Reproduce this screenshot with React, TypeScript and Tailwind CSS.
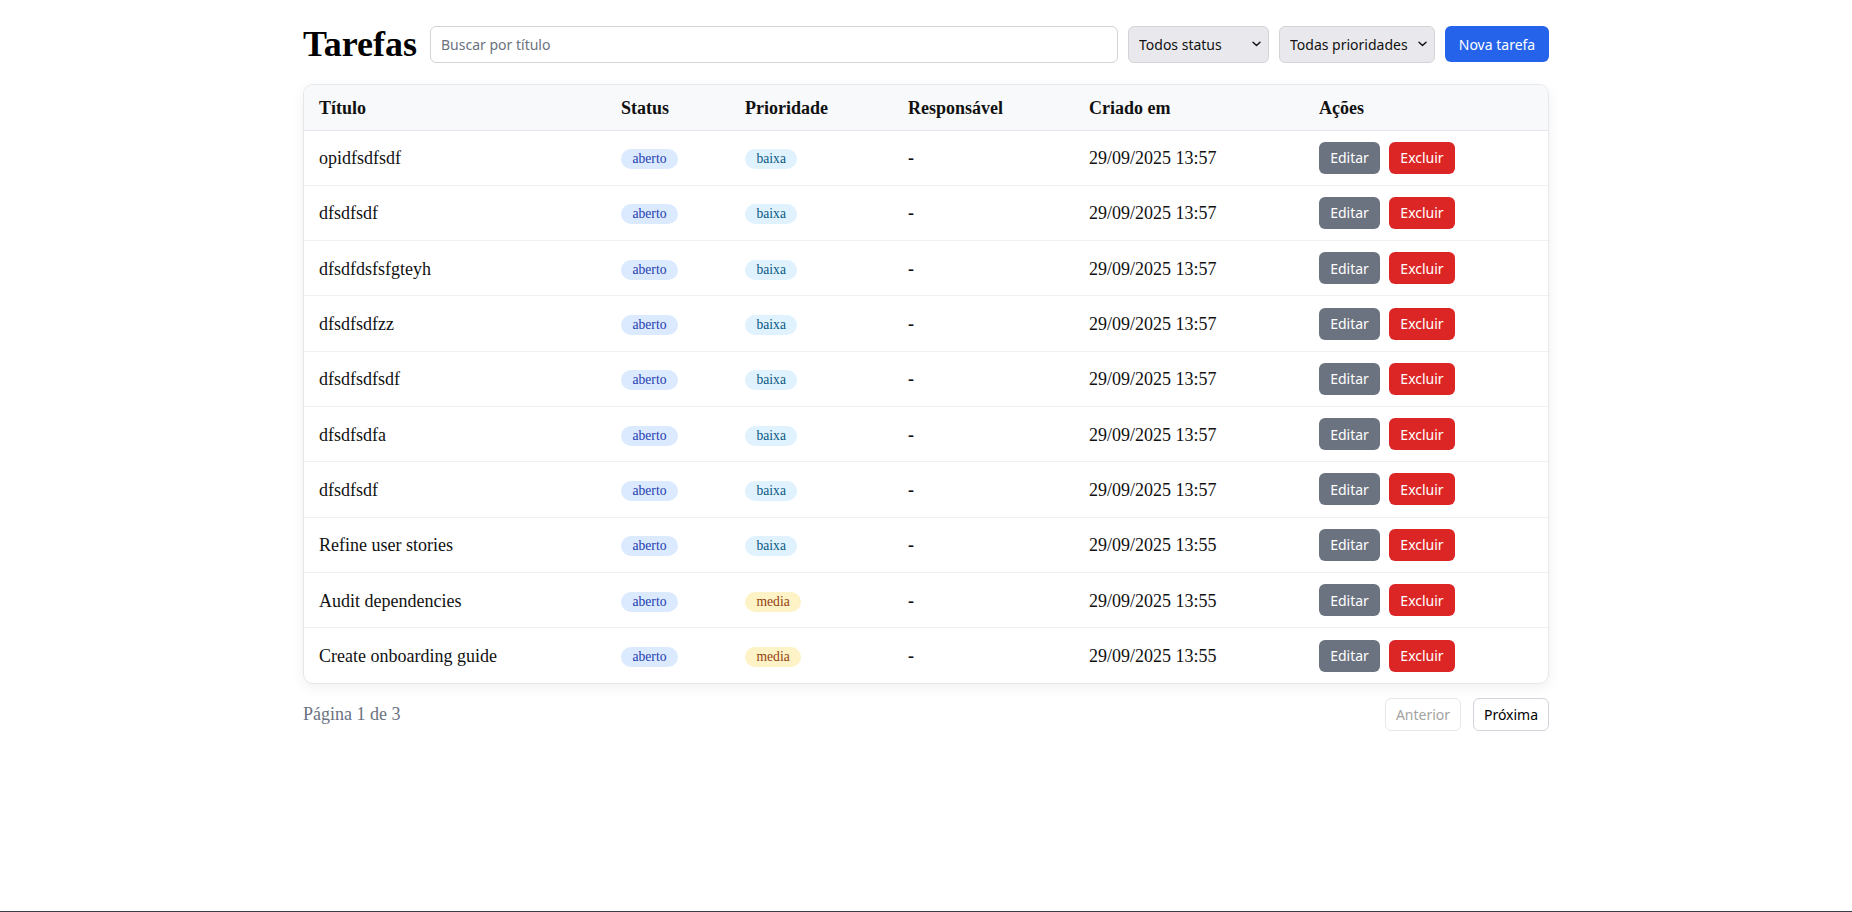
import React from "react";

type Row = { title: string; prio: "baixa" | "media"; time: string };

const rows: Row[] = [
  { title: "opidfsdfsdf", prio: "baixa", time: "29/09/2025 13:57" },
  { title: "dfsdfsdf", prio: "baixa", time: "29/09/2025 13:57" },
  { title: "dfsdfdsfsfgteyh", prio: "baixa", time: "29/09/2025 13:57" },
  { title: "dfsdfsdfzz", prio: "baixa", time: "29/09/2025 13:57" },
  { title: "dfsdfsdfsdf", prio: "baixa", time: "29/09/2025 13:57" },
  { title: "dfsdfsdfa", prio: "baixa", time: "29/09/2025 13:57" },
  { title: "dfsdfsdf", prio: "baixa", time: "29/09/2025 13:57" },
  { title: "Refine user stories", prio: "baixa", time: "29/09/2025 13:55" },
  { title: "Audit dependencies", prio: "media", time: "29/09/2025 13:55" },
  { title: "Create onboarding guide", prio: "media", time: "29/09/2025 13:55" },
];

const sans = "font-['Noto_Sans','Open_Sans',sans-serif]";

function Chevron() {
  return (
    <svg
      width="9"
      height="6"
      viewBox="0 0 9 6"
      className="pointer-events-none absolute right-[8px] top-1/2 -translate-y-1/2"
    >
      <path d="M1 1.2 L4.5 4.6 L8 1.2" fill="none" stroke="#111" strokeWidth="1.4" strokeLinecap="round" strokeLinejoin="round" />
    </svg>
  );
}

function Select({ label, width }: { label: string; width: string }) {
  return (
    <div className={`relative ${width}`}>
      <select
        className={`${sans} h-[37px] w-full appearance-none rounded-[6px] border border-[#d4d4d8] bg-[#e9e9ed] pl-[10px] pr-6 text-[14px] text-[#111]`}
        defaultValue=""
      >
        <option value="">{label}</option>
      </select>
      <Chevron />
    </div>
  );
}

export default function App() {
  return (
    <div className="box-border h-[912px] border-b border-[#3a3e4c] bg-white font-['Liberation_Serif','Times_New_Roman',serif] text-[18px] text-[#111]">
      <div className="mx-auto max-w-[1278px] px-4 pt-6">
        <div className="flex items-center gap-[10px]">
          <h1 className="mr-[3px] text-[36px] font-bold leading-[40px] text-black">Tarefas</h1>
          <input
            placeholder="Buscar por título"
            className={`${sans} h-[37px] flex-1 rounded-[6px] border border-[#d4d4d8] bg-white px-[10px] text-[14px] text-[#111] placeholder:text-[#6b7280] outline-none`}
          />
          <Select label="Todos status" width="w-[141px]" />
          <Select label="Todas prioridades" width="w-[156px]" />
          <button
            className={`${sans} h-[36px] w-[104px] rounded-[6px] bg-[#2563eb] text-[14px] text-white`}
          >
            Nova tarefa
          </button>
        </div>

        <div className="mt-5 overflow-hidden rounded-[10px] border border-[#e5e7eb] bg-white shadow-[0_4px_14px_rgba(0,0,0,0.06)]">
          <table className="w-full table-fixed border-collapse">
            <colgroup>
              <col className="w-[302px]" />
              <col className="w-[124px]" />
              <col className="w-[163px]" />
              <col className="w-[181px]" />
              <col className="w-[230px]" />
              <col />
            </colgroup>
            <thead>
              <tr className="border-b border-[#e5e7eb] bg-[#f8f9fb]">
                {["Título", "Status", "Prioridade", "Responsável", "Criado em", "Ações"].map((h) => (
                  <th key={h} className="h-[45px] px-[15px] pt-[2px] text-left align-middle font-bold">
                    {h}
                  </th>
                ))}
              </tr>
            </thead>
            <tbody>
              {rows.map((r, i) => (
                <tr key={i} className={i < rows.length - 1 ? "border-b border-[#f0f1f3]" : ""}>
                  <td className="h-[55.3px] px-[15px] pt-[2px] align-middle">{r.title}</td>
                  <td className="px-[15px] align-middle">
                    <span className="inline-block rounded-full bg-[#dbeafe] px-[11.5px] py-[2px] text-[13.6px] leading-[16px] text-[#1e40af]">
                      aberto
                    </span>
                  </td>
                  <td className="px-[15px] align-middle">
                    {r.prio === "baixa" ? (
                      <span className="inline-block rounded-full bg-[#e0f2fe] px-[11.5px] py-[2px] text-[13.6px] leading-[16px] text-[#075985]">
                        baixa
                      </span>
                    ) : (
                      <span className="inline-block rounded-full bg-[#fef3c7] px-[11.5px] py-[2px] text-[13.6px] leading-[16px] text-[#92400e]">
                        media
                      </span>
                    )}
                  </td>
                  <td className="px-[15px] pt-[2px] align-middle font-bold">-</td>
                  <td className="px-[15px] pt-[2px] align-middle">{r.time}</td>
                  <td className="px-[15px] align-middle">
                    <div className="flex gap-[9px]">
                      <button className={`${sans} h-[32px] w-[61px] rounded-[6px] bg-[#6b7280] text-[14px] text-white`}>
                        Editar
                      </button>
                      <button className={`${sans} h-[32px] w-[66px] rounded-[6px] bg-[#dc2626] text-[14px] text-white`}>
                        Excluir
                      </button>
                    </div>
                  </td>
                </tr>
              ))}
            </tbody>
          </table>
        </div>

        <div className="mt-[14px] flex items-center justify-between">
          <span className="text-[18px] text-[#6b7280]">Página 1 de 3</span>
          <div className="flex gap-3">
            <button
              disabled
              className={`${sans} h-[33px] w-[76px] rounded-[6px] border border-[#e5e7eb] bg-white text-[14px] text-[#a3a3a3]`}
            >
              Anterior
            </button>
            <button
              className={`${sans} h-[33px] w-[76px] rounded-[6px] border border-[#d1d5db] bg-white text-[14px] text-black`}
            >
              Próxima
            </button>
          </div>
        </div>
      </div>
    </div>
  );
}
